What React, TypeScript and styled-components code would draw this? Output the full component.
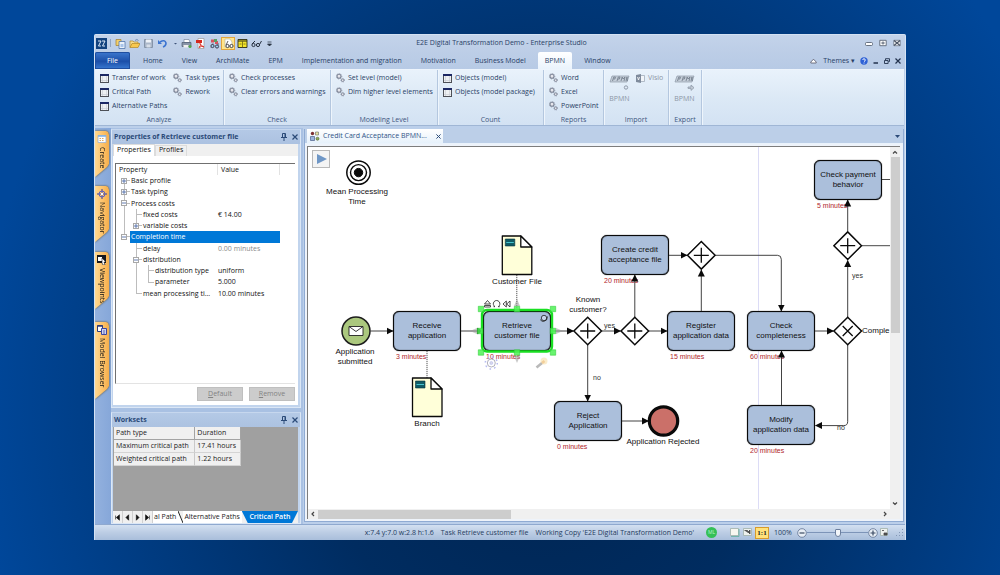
import React from 'react';
import styled, { createGlobalStyle, css } from 'styled-components';

const ui = '"Open Sans", "Noto Sans", sans-serif';
const diagramFont = '"Liberation Sans", Arial, sans-serif';
const ink = '#293f66';

const GlobalStyle = createGlobalStyle`
  * { box-sizing: border-box; }
  body {
    margin: 0;
    min-height: 100vh;
    background: radial-gradient(ellipse 56% 110% at 54% 70%, #002450 0%, #002c60 40%, #00479a 100%);
    font: 7px/10px ${ui};
    color: ${ink};
  }
  button {
    margin: 0;
    padding: 0;
    border: 0;
    background: none;
    color: inherit;
    font: inherit;
    white-space: nowrap;
  }
  svg { display: block; flex: none; }
`;

const Page = styled.main`
  padding: 34px 94px 35px;
`;

const Window = styled.div`
  display: flex;
  flex-direction: column;
  background: #bbcfe9;
  border-left: 1px solid #d5e3f5;
  border-right: 1px solid #d5e3f5;
  border-radius: 2px 2px 0 0;
  overflow: hidden;
`;

/* ---------- title bar ---------- */

const TitleBar = styled.header`
  display: grid;
  grid-template-columns: 1fr auto 1fr;
  align-items: center;
  height: 17px;
  padding: 0 4px 0 1px;
  border-top: 1px solid #d3e1f3;
  background: linear-gradient(#c3d3ea, #bdcee7);
`;

const WindowTitle = styled.span`
  padding-left: 6px;
`;

const QuickAccess = styled.div`
  display: flex;
  align-items: center;
  gap: 2px;
`;

const QuickButton = styled.button<{ $active?: boolean; $narrow?: boolean }>`
  display: grid;
  place-items: center;
  width: ${(p) => (p.$narrow ? 8 : 12)}px;
  height: 13px;
  ${(p) =>
    p.$active &&
    css`
      width: 14px;
      margin: 0 -1px;
      background: #ffe58c;
      box-shadow: inset 0 0 0 1px #e2a63c;
    `}
`;

const Divider = styled.span`
  width: 1px;
  height: 8px;
  margin: 0 1px;
  background: #8fa4c4;
`;

const WindowButtons = styled.div`
  display: flex;
  justify-content: flex-end;
  gap: 6px;
`;

/* ---------- ribbon ---------- */

const TabRow = styled.nav`
  display: flex;
  align-items: stretch;
  gap: 1px;
  height: 18px;
  padding-top: 1px;
  background: linear-gradient(#bdcee7, #b7cae5);
`;

const FileTab = styled.button`
  width: 35px;
  margin-right: 3px;
  border-radius: 2px 2px 0 0;
  background: linear-gradient(#3d78cf, #1c4fa8 55%, #3a7ad2);
  box-shadow: inset 0 0 0 1px #1f4e9f;
  color: #fff;
`;

const RibbonTab = styled.button<{ $active?: boolean }>`
  padding: 0 9px;
  ${(p) =>
    p.$active &&
    css`
      margin: 0 2px;
      padding: 0 7px;
      border-radius: 2px 2px 0 0;
      background: linear-gradient(#fff, #eaf3fc);
    `}
`;

const TabTools = styled.div`
  display: flex;
  align-items: center;
  gap: 5px;
  margin-left: auto;
  padding-right: 4px;
`;

const Ribbon = styled.section`
  display: flex;
  height: 57px;
  margin-right: 1px;
  background: linear-gradient(#e9f2fb, #dce9f6 50%, #d3e2f3);
  border-top: 1px solid #edf4fc;
  border-bottom: 1px solid #9fb6d5;
`;

const Group = styled.div<{ $width: number }>`
  display: flex;
  flex-direction: column;
  flex: none;
  width: ${(p) => p.$width}px;
  padding: 1px 0 0 5px;
  border-right: 1px solid #b4c7df;
  box-shadow: 1px 0 0 #eef5fc;
`;

const GroupColumns = styled.div`
  display: flex;
  flex: none;
  gap: 6px;
  height: 42px;
`;

const GroupColumn = styled.div`
  display: flex;
  flex-direction: column;
`;

const GroupLabel = styled.div`
  margin-left: -5px;
  text-align: center;
  line-height: 13px;
  color: #3e5680;
`;

const Command = styled.button<{ $muted?: boolean }>`
  display: flex;
  align-items: center;
  gap: 3px;
  height: 14px;
  color: ${(p) => (p.$muted ? '#8c96a5' : ink)};
`;

const BigCommand = styled.button`
  display: flex;
  flex-direction: column;
  align-items: center;
  gap: 3px;
  height: 38px;
  padding-top: 3px;
  color: #8c96a5;
`;

/* ---------- work area ---------- */

const Body = styled.div`
  display: flex;
  padding-top: 2px;
  background: #bbcfea;
`;

const Dock = styled.aside`
  display: flex;
  flex-direction: column;
  flex: none;
  width: 16px;
  padding-top: 3px;
  background: linear-gradient(90deg, #93b1de, #86a7d9);
`;

const DockShadow = styled.div<{ $height: number; $gap: number }>`
  width: 15px;
  height: ${(p) => p.$height}px;
  margin-bottom: ${(p) => p.$gap}px;
  filter: drop-shadow(0 0 1px #5c5030);
`;

const DockTab = styled.button`
  display: flex;
  flex-direction: column;
  align-items: center;
  gap: 3px;
  width: 14px;
  height: 100%;
  padding-top: 3px;
  background: linear-gradient(90deg, #ffd992, #fdc066 60%, #f4ae4c);
  clip-path: polygon(0 0, 11px 0, 13px 1px, 14px 4px, 14px calc(100% - 13px), 12px calc(100% - 10px), 0 100%);
  color: #111;
`;

const DockText = styled.span`
  writing-mode: vertical-rl;
  line-height: 8px;
`;

const SideColumn = styled.div`
  display: flex;
  flex-direction: column;
  flex: none;
  gap: 4px;
  width: 192px;
  padding: 1px 2px 0 0;
  background: #a9c1e3;
`;

const Panel = styled.section<{ $grow?: boolean }>`
  display: flex;
  flex-direction: column;
  ${(p) => p.$grow && 'flex: 1;'}
  border: 1px solid #dbe7f6;
  border-top-color: #c6d7ee;
  background: #c1d4ed;
`;

const PanelHeader = styled.h2`
  display: flex;
  align-items: center;
  gap: 5px;
  height: 14px;
  margin: 0;
  padding: 0 2px;
  background: linear-gradient(#b4c9e6, #acc2e1);
  font: 700 7px/14px ${ui};
  color: #2b4a78;
`;

const PanelTitle = styled.span`
  flex: 1;
`;

const PanelBody = styled.div<{ $flush?: boolean }>`
  display: flex;
  flex-direction: column;
  flex: 1;
  margin: 0 2px ${(p) => (p.$flush ? 0 : 2)}px 1px;
  background: #fff;
`;

const PageTabs = styled.div`
  display: flex;
  align-items: flex-end;
  height: 12px;
  background: #f0f0f0;
  color: #111;
`;

const PageTab = styled.button<{ $active?: boolean }>`
  height: ${(p) => (p.$active ? 12 : 11)}px;
  padding: 0 3px 2px;
  line-height: 8px;
  border: 1px solid #dcdcdc;
  border-bottom: 0;
  background: ${(p) => (p.$active ? '#fff' : '#f0f0f0')};
`;

const TreeBox = styled.div`
  height: 221px;
  margin: 7px 3px 3px 2px;
  border-left: 1px solid #707070;
  border-top: 1px solid #707070;
  border-bottom: 1px solid #e3e3e3;
  color: #111;
`;

const TreeHead = styled.div`
  display: grid;
  grid-template-columns: 102px 62px;
  height: 11px;
  line-height: 11px;

  span {
    padding-left: 3px;
    border-right: 1px solid #e2e2e2;
  }
`;

const TreeRows = styled.div`
  display: grid;
  grid-auto-rows: 1fr;
  width: 164px;
  height: 124px;
`;

const TreeRow = styled.div`
  display: grid;
  grid-template-columns: 102px 62px;
  align-items: stretch;
`;

const TreeName = styled.div`
  display: flex;
  min-width: 0;
  padding-left: 2px;
`;

const TreeText = styled.span<{ $selected?: boolean }>`
  flex: 1;
  padding-left: 1px;
  line-height: 11px;
  white-space: nowrap;
  ${(p) => p.$selected && 'background: #0078d7; color: #fff;'}
`;

const TreeValue = styled.span<{ $selected?: boolean; $muted?: boolean }>`
  line-height: 11px;
  white-space: nowrap;
  color: ${(p) => (p.$muted ? '#8a8a8a' : '#111')};
  ${(p) => p.$selected && 'background: #0078d7;'}
`;

type GuideKind = ' ' | '|' | 'L' | 'T' | 'top';

const Guide = styled.span<{ $kind: GuideKind }>`
  display: flex;
  align-items: center;
  justify-content: center;
  flex: none;
  width: 12px;
  background-repeat: no-repeat;
  background-image: linear-gradient(#bdbdbd, #bdbdbd), linear-gradient(#bdbdbd, #bdbdbd);
  background-size: ${(p) =>
    p.$kind === ' '
      ? '0 0, 0 0'
      : p.$kind === '|'
        ? '1px 100%, 0 0'
        : p.$kind === 'T'
          ? '1px 100%, 6px 1px'
          : '1px 50%, 6px 1px'};
  background-position: ${(p) => (p.$kind === 'top' ? '6px 100%' : '6px 0')}, 6px 50%;
`;

const Toggle = styled.button`
  display: grid;
  place-items: center;
  width: 6px;
  height: 6px;
  border: 1px solid #a8a8a8;
  background: #fff;
`;

const ButtonBar = styled.div`
  display: flex;
  justify-content: flex-end;
  gap: 6px;
  padding: 0 3px 4px 0;
`;

const DisabledButton = styled.button`
  width: 46px;
  height: 14px;
  border: 1px solid #bfbfbf;
  background: #ccc;
  color: #838383;
`;

const GridArea = styled.div`
  flex: 1;
  padding-left: 1px;
  background: #a0a0a0;
`;

const PathTable = styled.table`
  width: 127px;
  border-collapse: separate;
  border-spacing: 0;
  background: #f0f0f0;
  color: #222;

  th, td {
    height: 13px;
    padding: 0 2px;
    border-right: 1px solid #c9c9c9;
    border-bottom: 1px solid #d4d4d4;
    font-weight: 400;
    text-align: left;
    line-height: 12px;
    white-space: nowrap;
  }
  th { border-color: #a3a3a3; }
`;

const SheetTabs = styled.div`
  display: flex;
  height: 12px;
  background: #f0f0f0;
  color: #222;
`;

const SheetNav = styled.button`
  display: grid;
  place-items: center;
  width: 10px;
  border-right: 1px solid #d0d0d0;
`;

const SheetTab = styled.button<{ $active?: boolean }>`
  padding: 0 2px 0 1px;
  line-height: 12px;
  ${(p) =>
    p.$active
      ? css`
          flex: 1;
          background: #0078d7;
          color: #fff;
          font-weight: 600;
          clip-path: polygon(0 0, 100% 0, calc(100% - 6px) 100%, 6px 100%);
          padding: 0;
        `
      : css`
          background: #fff;
        `}
`;

/* ---------- editor ---------- */

const Editor = styled.section`
  display: flex;
  flex-direction: column;
  flex: 1;
  min-width: 0;
  margin: 1px 1px 2px;
  border: 1px solid #8fabd3;
  border-top: 0;
  background: #eef3fa;
`;

const EditorTabs = styled.div`
  display: flex;
  align-items: center;
  height: 15px;
  padding: 0 3px 0 2px;
  background: #bccfe8;
  border-bottom: 1px solid #eaf3fc;
`;

const EditorTab = styled.div`
  display: flex;
  align-items: center;
  gap: 3px;
  height: 14px;
  padding: 0 2px 0 3px;
  background: linear-gradient(#fff, #e6f1fb);
`;

const EditorTabLabel = styled.button`
  margin-right: 6px;
  color: #2f5486;
`;

const MenuArrow = styled.button`
  margin-left: auto;
`;

const CanvasFrame = styled.div`
  display: grid;
  grid-template-columns: minmax(0, 1fr) 10px;
  grid-template-rows: minmax(362px, 1fr) 10px;
  flex: 1;
  margin: 2px 3px 2px 2px;
  border-left: 1px solid #7d7d7d;
  border-top: 1px solid #7d7d7d;
  background: #f0f0f0;
`;

const Canvas = styled.div`
  position: relative;
  overflow: hidden;
  background: #fff;
  font: 8px/10px ${diagramFont};
  color: #111;
`;

const VScroll = styled.div`
  display: flex;
  flex-direction: column;
  align-items: center;
`;

const HScroll = styled.div`
  display: flex;
  align-items: center;
`;

const ScrollArrow = styled.button`
  display: grid;
  place-items: center;
  flex: none;
  width: 10px;
  height: 10px;
`;

const VThumb = styled.div`
  width: 9px;
  height: 176px;
  margin-bottom: auto;
  background: #cdcdcd;
`;

const HThumb = styled.div`
  width: 193px;
  height: 9px;
  margin-right: auto;
  background: #cdcdcd;
`;

/* ---------- diagram ---------- */

/* Model coordinate shown in the canvas's top left corner. */
const origin = { x: 308, y: 147 };

const Drawing = styled.svg`
  position: absolute;
  left: 0;
  top: 0;
  width: 100%;
  height: 100%;
`;

const Task = styled.div<{ $x: number; $y: number }>`
  position: absolute;
  left: ${(p) => p.$x - origin.x}px;
  top: ${(p) => p.$y - origin.y}px;
  display: grid;
  place-items: center;
  width: 68px;
  height: 40px;
  border: 1px solid #0a0a0a;
  border-radius: 6px;
  background: #abbfdb;
  box-shadow: inset 0 0 1px #000, 0 0 1px #000;
  text-align: center;
  white-space: pre-line;
`;

const Caption = styled.div<{ $x: number; $y: number }>`
  position: absolute;
  left: ${(p) => p.$x - origin.x}px;
  top: ${(p) => p.$y - origin.y}px;
  transform: translateX(-50%);
  text-align: center;
  white-space: pre;
`;

const Note = styled.div<{ $x: number; $y: number; $tone?: 'time' | 'plain' }>`
  position: absolute;
  left: ${(p) => p.$x - origin.x}px;
  top: ${(p) => p.$y - origin.y}px;
  font-size: ${(p) => (p.$tone === 'plain' ? 8 : 7)}px;
  line-height: ${(p) => (p.$tone === 'plain' ? 10 : 8)}px;
  white-space: nowrap;
  color: ${(p) => (p.$tone === 'time' ? '#b0262c' : p.$tone === 'plain' ? '#111' : '#333')};
`;

const PlayButton = styled.button`
  position: absolute;
  left: 4px;
  top: 3px;
  display: grid;
  place-items: center;
  width: 18px;
  height: 18px;
  border: 1px solid #b9b9b9;
  background: #f4f4f4;
`;

/* ---------- status bar ---------- */

const StatusBar = styled.footer`
  display: flex;
  align-items: center;
  justify-content: flex-end;
  height: 16px;
  padding-right: 1px;
  border-top: 1px solid #8fa9cf;
  background: linear-gradient(#d3e0f1, #bccde4 50%, #a9bedb);
  color: #243b60;
`;

const StatusText = styled.span`
  margin-right: 7px;
  white-space: nowrap;
`;

const Presence = styled.span`
  width: 11px;
  height: 11px;
  margin: 0 12px 0 5px;
  border-radius: 50%;
  background: #35c057;
  color: #b9f0c6;
  text-align: center;
  font: 5px/11px ${ui};
`;

const StatusButton = styled.button`
  display: grid;
  place-items: center;
  width: 12px;
  height: 12px;
  margin-right: 1px;
`;

const ActualSize = styled.button`
  width: 14px;
  height: 12px;
  margin-right: 5px;
  border: 1px solid #d79b2c;
  background: #ffe27a;
  font: 700 7px/10px "Liberation Serif", serif;
  color: #222;
`;

const Percent = styled.output`
  width: 23px;
`;

const ZoomSlider = styled.input`
  appearance: none;
  width: 61px;
  height: 10px;
  margin: 0;
  background: linear-gradient(#7d94b8, #7d94b8) center / 100% 1px no-repeat;

  &::-webkit-slider-thumb {
    appearance: none;
    width: 6px;
    height: 8px;
    border: 1px solid #6c7f9e;
    border-radius: 1px 1px 3px 3px;
    background: #f3f6fa;
  }
`;

const Grip = styled.svg`
  margin-left: 4px;
`;

/* ---------- small icons ---------- */

const Gears = () => (
  <svg width="9" height="10" viewBox="0 0 9 10" fill="none" stroke="#7f8798">
    <circle cx="3" cy="3.2" r="2" strokeWidth="1.1" fill="#e6e6ec" />
    <circle cx="3" cy="3.2" r="2.8" strokeWidth=".7" strokeDasharray="1 1.1" />
    <circle cx="6.7" cy="7.2" r="1.3" strokeWidth=".9" fill="#e6e6ec" />
    <circle cx="6.7" cy="7.2" r="1.9" strokeWidth=".6" strokeDasharray=".8 .8" />
  </svg>
);

const Sheet = () => (
  <svg width="9" height="9" viewBox="0 0 9 9">
    <rect x=".5" y=".5" width="8" height="8" fill="#eef1f3" stroke="#4d5057" />
    <rect x="0" y="0" width="9" height="2" fill="#1c2864" />
    <path d="M2.5 2v6M6.5 2v6M1 6.5h7" stroke="#c6cad1" strokeWidth=".6" />
  </svg>
);

const BpmnMark = ({ arrow }: { arrow?: boolean }) => (
  <svg width="21" height="17" viewBox="0 0 21 17" fill="none" stroke="#8e99a8">
    <path d="M3 2h17l-2 6H1z" fill="#c5ced9" strokeWidth=".7" />
    <path d="M3.500 7l1.300-4h1.600l-.5 2H4.600M8 7l1.300-4h1.700l-.6 2H9M12 7l1.200-4 .8 2 2-2-1 4M17 7l1-4 .4 4" strokeWidth=".9" stroke="#76818f" />
    {arrow ? (
      <path d="M14 13h3v-2l3 2.700-3 2.700v-2h-3z" fill="#c3ccd7" strokeWidth=".8" />
    ) : (
      <circle cx="17" cy="13.500" r="1.700" strokeWidth="1" />
    )}
  </svg>
);

const Pin = () => (
  <svg width="6" height="8" viewBox="0 0 6 8" fill="none" stroke="#2b4a78">
    <path d="M1.500 .5h3v4h-3zM0 4.500h6M3 4.500V8" />
    <path d="M4 1v3" />
  </svg>
);

const Cross = ({ color = '#2b4a78', size = 6 }: { color?: string; size?: number }) => (
  <svg width={size} height={size} viewBox="0 0 6 6" stroke={color} strokeWidth="1.200">
    <path d="M.5.5l5 5M5.500.5l-5 5" />
  </svg>
);

const quickIcons: { name: string; active?: boolean; narrow?: boolean; art: React.ReactNode }[] = [
  {
    name: 'New package',
    art: (
      <>
        <path d="M1 1.500h5v6H1z" fill="#f3cf6b" stroke="#a07c2d" strokeWidth=".7" />
        <path d="M4 3.500h6v7H4z" fill="#e9f1fb" stroke="#5176ad" strokeWidth=".8" />
        <path d="M5.500 6h3v3h-3z" fill="#a8c4ea" />
      </>
    ),
  },
  {
    name: 'Open',
    art: (
      <>
        <path d="M1 9.500V3h3l1 1h4v2" fill="#f7dc8a" stroke="#b38724" strokeWidth=".7" />
        <path d="M1 9.500L3 5.500h8l-2 4z" fill="#f8c84e" stroke="#b38724" strokeWidth=".7" />
        <path d="M6 2.500q2-2 3.500 0" fill="none" stroke="#5c78a8" strokeWidth=".8" />
      </>
    ),
  },
  {
    name: 'Save',
    art: (
      <>
        <path d="M1.500 1.500h8v8h-8z" fill="#aab7c9" stroke="#8594a9" />
        <path d="M3 1.500h5v3H3z" fill="#eef2f7" />
        <path d="M3.500 6.500h4v3h-4z" fill="#d7dee8" />
      </>
    ),
  },
  {
    name: 'Undo',
    art: (
      <>
        <path d="M3 4q5-3 6 1 0 3-3 4" fill="none" stroke="#3c74d0" strokeWidth="1.600" />
        <path d="M1 2v4h4z" fill="#3c74d0" />
      </>
    ),
  },
  { name: 'Undo history', narrow: true, art: <path d="M4 5h3L5.500 6.500z" fill="#3d5379" /> },
  {
    name: 'Print',
    art: (
      <>
        <path d="M3 1.500h5l1 3H3z" fill="#fff" stroke="#77869d" strokeWidth=".7" />
        <path d="M1 4.500h9v4H1z" fill="#8894a8" stroke="#4c596e" strokeWidth=".7" />
        <path d="M2.500 7h5v2.500h-5z" fill="#eee" />
        <circle cx="9" cy="8.500" r="1.500" fill="#4fa64a" />
      </>
    ),
  },
  {
    name: 'Export PDF',
    art: (
      <>
        <path d="M3 .5h6v10H3z" fill="#fff" stroke="#9a9a9a" strokeWidth=".7" />
        <path d="M1 2h6v3H1z" fill="#d5281f" />
        <path d="M4 9.500q3-4 1-4t4 3.500q-2-1.500-5 .5" fill="none" stroke="#d5281f" strokeWidth=".9" />
      </>
    ),
  },
  {
    name: 'Colours',
    art: (
      <>
        <path d="M2 1.500h3v3H2zM6 3h3v3H6z" fill="#d8545e" />
        <path d="M5 1h3v3H5z" fill="#58a266" />
        <path d="M2 9.500l2-4M9.500 5.500l-2 4" stroke="#445" strokeWidth=".8" />
        <circle cx="3.500" cy="8" r="1.600" fill="#9fd0f0" stroke="#334" strokeWidth=".9" />
        <circle cx="8" cy="8.500" r="1.600" fill="#9fd0f0" stroke="#334" strokeWidth=".9" />
      </>
    ),
  },
  {
    name: 'Labels view',
    active: true,
    art: (
      <>
        <path d="M2 1h5l2 3v5H2z" fill="#fff" stroke="#b9b9a5" strokeWidth=".7" />
        <circle cx="4.500" cy="8" r="1.600" fill="#fff" stroke="#333" strokeWidth=".9" />
        <circle cx="8.500" cy="8" r="1.600" fill="#fff" stroke="#333" strokeWidth=".9" />
        <path d="M3 7l2-4" stroke="#333" strokeWidth=".8" />
      </>
    ),
  },
  {
    name: 'Table view',
    art: (
      <>
        <path d="M1 1.500h9v8H1z" fill="#f4e52b" stroke="#2b2b14" strokeWidth=".9" />
        <path d="M1 3h9" stroke="#2b2b14" strokeWidth="1.200" />
        <path d="M5.500 3v6.500M2.500 6h2M6.500 6h2" stroke="#6c6510" strokeWidth=".8" />
      </>
    ),
  },
  {
    name: 'View settings',
    art: (
      <>
        <circle cx="2.500" cy="7" r="1.600" fill="none" stroke="#26303f" />
        <circle cx="7" cy="7" r="1.600" fill="none" stroke="#26303f" />
        <path d="M1 6l3-3M8.500 6.500L10.500 3" stroke="#26303f" />
      </>
    ),
  },
  { name: 'Customize toolbar', narrow: true, art: <path d="M3.500 4h4M3.500 6h4L5.500 8z" fill="#26303f" stroke="#26303f" strokeWidth=".7" /> },
];

/* ---------- data ---------- */

const ribbonTabs = ['Home', 'View', 'ArchiMate', 'EPM', 'Implementation and migration', 'Motivation', 'Business Model', 'BPMN', 'Window'];

const groups: { label: string; width: number; icon: 'sheet' | 'gears'; columns: { icon?: 'gears'; items: string[] }[] }[] = [
  {
    label: 'Analyze',
    width: 129,
    icon: 'sheet',
    columns: [{ items: ['Transfer of work', 'Critical Path', 'Alternative Paths'] }, { icon: 'gears', items: ['Task types', 'Rework'] }],
  },
  { label: 'Check', width: 107, icon: 'gears', columns: [{ items: ['Check processes', 'Clear errors and warnings'] }] },
  { label: 'Modeling Level', width: 107, icon: 'gears', columns: [{ items: ['Set level (model)', 'Dim higher level elements'] }] },
  { label: 'Count', width: 106, icon: 'sheet', columns: [{ items: ['Objects (model)', 'Objects (model package)'] }] },
  { label: 'Reports', width: 60, icon: 'gears', columns: [{ items: ['Word', 'Excel', 'PowerPoint'] }] },
];

const treeRows: { guides: GuideKind[]; toggle?: '+' | '-'; name: string; value?: string; muted?: boolean; selected?: boolean }[] = [
  { guides: ['top'], toggle: '+', name: 'Basic profile' },
  { guides: ['T'], toggle: '+', name: 'Task typing' },
  { guides: ['T'], toggle: '-', name: 'Process costs' },
  { guides: ['|', 'T'], name: 'fixed costs', value: '€ 14.00' },
  { guides: ['|', 'L'], toggle: '+', name: 'variable costs' },
  { guides: ['L'], toggle: '-', name: 'Completion time', selected: true },
  { guides: [' ', 'T'], name: 'delay', value: '0.00 minutes', muted: true },
  { guides: [' ', 'T'], toggle: '-', name: 'distribution' },
  { guides: [' ', '|', 'T'], name: 'distribution type', value: 'uniform' },
  { guides: [' ', '|', 'L'], name: 'parameter', value: '5.000' },
  { guides: [' ', 'L'], name: 'mean processing ti...', value: '10.00 minutes' },
];

const tasks: { x: number; y: number; text: string; time: string }[] = [
  { x: 393, y: 311, text: 'Receive\napplication', time: '3 minutes' },
  { x: 483, y: 311, text: 'Retrieve\ncustomer file', time: '10 minutes' },
  { x: 601, y: 235, text: 'Create credit\nacceptance file', time: '20 minutes' },
  { x: 667, y: 311, text: 'Register\napplication data', time: '15 minutes' },
  { x: 554, y: 401, text: 'Reject\nApplication', time: '0 minutes' },
  { x: 747, y: 311, text: 'Check\ncompleteness', time: '60 minutes' },
  { x: 747, y: 405, text: 'Modify\napplication data', time: '20 minutes' },
  { x: 814, y: 160, text: 'Check payment\nbehavior', time: '5 minutes' },
];

const flows = [
  'M370.500 331H393',
  'M461 331H483',
  'M551 331H573.500',
  'M602 331H620.500',
  'M634.800 317V275',
  'M649 331H667',
  'M701.300 311V270',
  'M669 255.300H687',
  'M715.500 255.300H777.500Q781.300 255.300 781.300 259.300V311',
  'M587.700 345V401',
  'M622 421H648.500',
  'M815 331H833.500',
  'M781.500 405V351',
  'M847.700 345V421.500Q847.700 425.600 843.700 425.600H815.500',
  'M847.700 317V260.500',
  'M847.700 231V200',
];

const gateways: [number, number, 'plus' | 'x'][] = [
  [587.7, 331, 'plus'],
  [634.8, 331, 'plus'],
  [701.3, 255.3, 'plus'],
  [847.7, 245.7, 'plus'],
  [847.7, 331, 'x'],
];

const captions: [number, number, string][] = [
  [357, 187, 'Mean Processing\nTime'],
  [517, 277, 'Customer File'],
  [355, 347, 'Application\nsubmitted'],
  [427, 419, 'Branch'],
  [588, 295, 'Known\ncustomer?'],
  [663, 437, 'Application Rejected'],
];

const notes: [number, number, string][] = [
  [604, 322, 'yes'],
  [593, 374, 'no'],
  [852, 272, 'yes'],
  [837, 424, 'no'],
];

const handles: [number, number][] = [
  [481, 309], [517, 309], [553, 309],
  [480, 331], [553, 331],
  [481, 352.5], [517, 352.5], [553, 352.5],
];

const Document = ({ x, y }: { x: number; y: number }) => (
  <g transform={`translate(${x} ${y})`} strokeLinejoin="round">
    <path d="M0 0H18.500L29.500 11V38.500H0z" fill="#ffffd9" stroke="#0a0a0a" strokeWidth="1.300" />
    <path d="M18.500 0V11H29.500z" fill="#fff" stroke="#0a0a0a" strokeWidth="1.300" />
    <rect x="3" y="3" width="9.500" height="7" fill="#0f5b66" stroke="#08323a" strokeWidth=".6" />
    <path d="M4 6.500h7.500" stroke="#48c4cf" />
  </g>
);

const world = `translate(${-origin.x} ${-origin.y})`;

function Connectors() {
  return (
    <Drawing aria-hidden="true">
      <defs>
        <marker id="head" viewBox="0 0 7 8" refX="6.500" refY="4" markerWidth="7" markerHeight="8" markerUnits="userSpaceOnUse" orient="auto">
          <path d="M0 .5L7 4 0 7.500z" fill="#0a0a0a" />
        </marker>
      </defs>
      <g transform={world} fill="none">
        <path d="M758.500 147V520" stroke="#dcdcf6" />
        <path d="M516.800 275V311M427 351V378" stroke="#555" strokeDasharray="1.200 .8" />
        <path d="M882 179.500H900M862 245.700H900" stroke="#333" strokeWidth=".9" />
      </g>
    </Drawing>
  );
}

function Shapes() {
  return (
    <Drawing aria-hidden="true">
      <g transform={world} fill="none">
        <g stroke="#2c2c2c" strokeWidth=".9">
          {flows.map((d) => (
            <path key={d} d={d} markerEnd="url(#head)" />
          ))}
        </g>
        {gateways.map(([x, y, kind]) => (
          <g key={`${x}-${y}`} transform={`translate(${x} ${y})`} stroke="#0a0a0a">
            <path d="M0-13.800L13.800 0 0 13.800-13.800 0z" fill="#fff" strokeWidth="1.500" />
            <path d={kind === 'plus' ? 'M0-7.500V7.500M-7.500 0H7.500' : 'M-5-5L5 5M5-5L-5 5'} strokeWidth="1.300" />
          </g>
        ))}
        <g stroke="#0a0a0a">
          <circle cx="358.500" cy="172.600" r="11.700" strokeWidth="1.500" fill="#fff" />
          <circle cx="358.500" cy="172.600" r="8" strokeWidth="1.400" />
          <circle cx="358.500" cy="172.600" r="4.200" fill="#0a0a0a" />
        </g>
        <circle cx="356" cy="331" r="14" fill="#abc87e" stroke="#1c1c1c" strokeWidth="1.500" />
        <g stroke="#222" strokeWidth=".9">
          <path d="M349 326.500h14v9h-14z" fill="#fff" />
          <path d="M349 326.500l7 5 7-5" />
        </g>
        <circle cx="663.500" cy="421" r="14.200" fill="#cb7069" stroke="#0a0a0a" strokeWidth="3.200" />
        <Document x={502.3} y={236} />
        <Document x={412.5} y={378} />

        <rect x="482" y="310" width="70" height="41.500" rx="5" stroke="#19e022" strokeWidth="2.400" />
        <g fill="#4df255" stroke="#35cf3e" strokeWidth=".6" fillOpacity=".85">
          {handles.map(([x, y]) => (
            <path key={`${x}-${y}`} d={`M${x - 2.7} ${y - 2.7}h5.400v5.400h-5.400z`} />
          ))}
        </g>
        <g fill="#9a9a9a" fillOpacity=".55">
          <path d="M517 299l3 7h-6zM517 363l3-7h-6zM470 331l7-3v6zM563 331l-7-3v6z" />
        </g>
        <g stroke="#222" strokeWidth=".8">
          <path d="M484.500 304l3-3.500 3 3.500zM484.500 305.500h6v1.500h-6z" />
          <path d="M495 306.700h-1.500M495 306.700a3.300 3.300 0 1 1 3.200 0h1.600" />
          <path d="M506.300 301v6l-3.300-3zM510 301v6l-3.300-3z" />
          <circle cx="544" cy="318" r="2.700" fill="#c7d5e8" />
          <path d="M540.500 319.500q.5 2 3 2 4-.5 4-5" />
        </g>
        <g stroke="#b6bbf2">
          <circle cx="491.300" cy="363" r="4" strokeWidth=".9" stroke="#a9a9b5" />
          <circle cx="491.300" cy="363" r="1.500" fill="#d8d8e8" strokeWidth=".6" />
          <circle cx="491.300" cy="363" r="6" strokeWidth="1.500" strokeDasharray="1.600 3.110" />
        </g>
        <circle cx="544" cy="361" r="3.500" fill="#fbeccb" />
        <path d="M536.500 367.500l5.500-4.500" stroke="#b9b9b9" strokeWidth="2.600" />
        <path d="M542 363l2.500-2" stroke="#f3cf9a" strokeWidth="2.600" />
      </g>
    </Drawing>
  );
}

function DockItem({ label, height, gap, art }: { label: string; height: number; gap: number; art: React.ReactNode }) {
  return (
    <DockShadow $height={height} $gap={gap}>
      <DockTab>
        <svg width="10" height="10" viewBox="0 0 10 10">{art}</svg>
        <DockText>{label}</DockText>
      </DockTab>
    </DockShadow>
  );
}

export default function App() {
  return (
    <Page>
      <GlobalStyle />
      <Window>
        <TitleBar>
          <QuickAccess>
            <svg width="11" height="11" viewBox="0 0 11 11">
              <rect width="11" height="11" fill="#12427e" />
              <path d="M2 3h3L2.500 8H5M6 3h3L6.500 8H9" fill="none" stroke="#dbe8f7" />
            </svg>
            <Divider />
            {quickIcons.map((q) => (
              <QuickButton key={q.name} $active={q.active} $narrow={q.narrow} aria-label={q.name}>
                <svg width="11" height="11" viewBox="0 0 11 11">{q.art}</svg>
              </QuickButton>
            ))}
          </QuickAccess>
          <WindowTitle>E2E Digital Transformation Demo - Enterprise Studio</WindowTitle>
          <WindowButtons>
            <button aria-label="Minimize">
              <svg width="8" height="8" viewBox="0 0 8 8"><rect x=".5" y="3.500" width="7" height="3" rx="1" fill="#fff" stroke="#5a6475" strokeWidth=".9" /></svg>
            </button>
            <button aria-label="Restore">
              <svg width="8" height="8" viewBox="0 0 8 8"><path d="M.8 1.300h6.400v5.400H.8zM3 3.200h2v1.600H3z" fill="#fff" stroke="#5a6475" strokeWidth=".9" /></svg>
            </button>
            <button aria-label="Close">
              <svg width="8" height="8" viewBox="0 0 8 8"><path d="M.8 1.300h6.400v5.400H.8z" fill="#fff" stroke="#5a6475" strokeWidth=".7" /><path d="M1 1.500l6 5M7 1.500l-6 5" stroke="#4a5465" strokeWidth="1.200" /></svg>
            </button>
          </WindowButtons>
        </TitleBar>

        <TabRow>
          <FileTab>File</FileTab>
          {ribbonTabs.map((t) => (
            <RibbonTab key={t} $active={t === 'BPMN'}>{t}</RibbonTab>
          ))}
          <TabTools>
            <button aria-label="Collapse ribbon">
              <svg width="7" height="6" viewBox="0 0 7 6"><path d="M.8 4L3.500 1.200 6.200 4v1H.8z" fill="#fff" stroke="#556" strokeWidth=".8" /></svg>
            </button>
            <button>&nbsp;Themes ▾</button>
            <button aria-label="Help">
              <svg width="8" height="8" viewBox="0 0 8 8"><circle cx="4" cy="4" r="3.700" fill="#2f62d6" /><path d="M2.800 3q0-1.300 1.200-1.300T5.200 3 4 4.600M4 5.600v.9" fill="none" stroke="#fff" strokeWidth=".9" /></svg>
            </button>
            <button aria-label="Minimize view">
              <svg width="6" height="6" viewBox="0 0 6 6"><path d="M.5 5h4.500" stroke="#23324d" strokeWidth="1.500" /></svg>
            </button>
            <button aria-label="Restore view">
              <svg width="6" height="6" viewBox="0 0 6 6" fill="none" stroke="#23324d"><path d="M1.500 2V.7h4v2.800H4.500M.5 2.500h3.600v3H.5z" strokeWidth=".9" /></svg>
            </button>
            <button aria-label="Close view"><Cross color="#23324d" /></button>
          </TabTools>
        </TabRow>

        <Ribbon>
          {groups.map((g) => (
            <Group key={g.label} $width={g.width}>
              <GroupColumns>
                {g.columns.map((c, i) => (
                  <GroupColumn key={i}>
                    {c.items.map((item) => (
                      <Command key={item}>
                        {(c.icon ?? g.icon) === 'sheet' ? <Sheet /> : <Gears />}
                        {item}
                      </Command>
                    ))}
                  </GroupColumn>
                ))}
              </GroupColumns>
              <GroupLabel>{g.label}</GroupLabel>
            </Group>
          ))}
          <Group $width={65}>
            <GroupColumns>
              <BigCommand disabled><BpmnMark />BPMN</BigCommand>
              <GroupColumn>
                <Command $muted disabled>
                  <svg width="9" height="9" viewBox="0 0 9 9"><path d="M0 1l5-1v9L0 8z" fill="#7f8b9c" /><path d="M5 1.500h3.500v6H5" fill="#f2f5f9" stroke="#98a3b2" strokeWidth=".7" /><path d="M1.500 3l1 3 1-3" fill="none" stroke="#fff" strokeWidth=".8" /></svg>
                  Visio
                </Command>
              </GroupColumn>
            </GroupColumns>
            <GroupLabel>Import</GroupLabel>
          </Group>
          <Group $width={33}>
            <GroupColumns>
              <BigCommand disabled><BpmnMark arrow />BPMN</BigCommand>
            </GroupColumns>
            <GroupLabel>Export</GroupLabel>
          </Group>
        </Ribbon>

        <Body>
          <Dock>
            <DockItem
              label="Create"
              height={46}
              gap={9}
              art={<><path d="M1 1.500h8v7H1z" fill="#fff" stroke="#9ab0d0" strokeWidth=".8" /><path d="M1 2h8" stroke="#7fb0e4" strokeWidth="1.500" /><path d="M2.500 4.500h1.500M5 4.500h1.500M2.500 6.500h1.500M5 6.500h1.500" stroke="#e2a95c" /></>}
            />
            <DockItem
              label="Navigator"
              height={56}
              gap={10}
              art={<><path d="M5 0v10M0 5h10" stroke="#3b3f9c" /><circle cx="5" cy="5" r="3" fill="none" stroke="#5a5fc0" /><circle cx="5" cy="5" r="1.200" fill="#fff" /></>}
            />
            <DockItem
              label="Viewpoints"
              height={57}
              gap={13}
              art={<><path d="M0 0h9v8H0z" fill="#14161c" /><path d="M1 2h4v4H1z" fill="#fff" /><path d="M5 3l4 4H7l1 3H6L5 8z" fill="#fff" stroke="#14161c" strokeWidth=".6" /></>}
            />
            <DockItem
              label="Model Browser"
              height={77}
              gap={0}
              art={<><path d="M.5.5h5v6h-5z" fill="#fff" stroke="#2c3a78" /><path d="M.5 1h5" stroke="#2c3a78" strokeWidth="1.500" /><path d="M4.500 3.500h5v6h-5z" fill="#cdd3f2" stroke="#3c46a0" /><path d="M6 6h2M6 8h2" stroke="#3c46a0" strokeWidth=".8" /></>}
            />
          </Dock>

          <SideColumn>
            <Panel>
              <PanelHeader>
                <PanelTitle>Properties of Retrieve customer file</PanelTitle>
                <button aria-label="Pin properties"><Pin /></button>
                <button aria-label="Close properties"><Cross /></button>
              </PanelHeader>
              <PanelBody>
                <PageTabs>
                  <PageTab $active>Properties</PageTab>
                  <PageTab>Profiles</PageTab>
                </PageTabs>
                <TreeBox>
                  <TreeHead>
                    <span>Property</span>
                    <span>Value</span>
                  </TreeHead>
                  <TreeRows>
                    {treeRows.map((r) => (
                      <TreeRow key={r.name}>
                        <TreeName>
                          {r.guides.map((g, i) => (
                            <Guide key={i} $kind={g}>
                              {r.toggle && i === r.guides.length - 1 && (
                                <Toggle aria-label={`Toggle ${r.name}`}>
                                  <svg width="4" height="4" viewBox="0 0 4 4" stroke="#3b5c9e" strokeWidth=".8">
                                    <path d={r.toggle === '+' ? 'M0 2h4M2 0v4' : 'M0 2h4'} />
                                  </svg>
                                </Toggle>
                              )}
                            </Guide>
                          ))}
                          <TreeText $selected={r.selected}>{r.name}</TreeText>
                        </TreeName>
                        <TreeValue $selected={r.selected} $muted={r.muted}>{r.value}</TreeValue>
                      </TreeRow>
                    ))}
                  </TreeRows>
                </TreeBox>
                <ButtonBar>
                  <DisabledButton disabled><u>D</u>efault</DisabledButton>
                  <DisabledButton disabled><u>R</u>emove</DisabledButton>
                </ButtonBar>
              </PanelBody>
            </Panel>

            <Panel $grow>
              <PanelHeader>
                <PanelTitle>Worksets</PanelTitle>
                <button aria-label="Pin worksets"><Pin /></button>
                <button aria-label="Close worksets"><Cross /></button>
              </PanelHeader>
              <PanelBody $flush>
                <GridArea>
                  <PathTable>
                    <thead>
                      <tr><th scope="col">Path type</th><th scope="col">Duration</th></tr>
                    </thead>
                    <tbody>
                      <tr><td>Maximum critical path</td><td>17.41 hours</td></tr>
                      <tr><td>Weighted critical path</td><td>1.22 hours</td></tr>
                    </tbody>
                  </PathTable>
                </GridArea>
                <SheetTabs>
                  {['M1 1v5M6 0v7L2 3.500z', 'M5 0v7L1.500 3.500z', 'M2 0v7l3.500-3.500z', 'M1 0v7l4-3.500zM6 1v5'].map((d) => (
                    <SheetNav key={d} aria-label="Scroll tabs">
                      <svg width="7" height="7" viewBox="-1 -1 9 9" fill="#111" stroke="#111" strokeWidth=".8"><path d={d} /></svg>
                    </SheetNav>
                  ))}
                  <SheetTab>al Path</SheetTab>
                  <svg width="5" height="12" viewBox="0 0 5 12"><path d="M0 0l5 12H0z" fill="#fff" /><path d="M0 0l5 12" stroke="#222" /></svg>
                  <SheetTab>Alternative Paths</SheetTab>
                  <SheetTab $active>Critical Path</SheetTab>
                </SheetTabs>
              </PanelBody>
            </Panel>
          </SideColumn>

          <Editor>
            <EditorTabs>
              <EditorTab>
                <svg width="10" height="10" viewBox="0 0 10 10">
                  <circle cx="2.500" cy="2.500" r="1.700" fill="#7d2f33" />
                  <path d="M5.500 1h3v3h-3z" fill="#e9e3a0" stroke="#666" strokeWidth=".6" />
                  <path d="M.5 5.500h4v4h-4z" fill="#9bb4dd" stroke="#4c5f88" strokeWidth=".7" />
                  <circle cx="7.500" cy="7.700" r="1.500" fill="#8fae58" stroke="#4b5a2c" strokeWidth=".6" />
                </svg>
                <EditorTabLabel>Credit Card Acceptance BPMN...</EditorTabLabel>
                <button aria-label="Close model"><Cross size={5} /></button>
              </EditorTab>
              <MenuArrow aria-label="Open views">
                <svg width="5" height="3" viewBox="0 0 5 3"><path d="M0 0h5L2.500 3z" fill="#2b4a78" /></svg>
              </MenuArrow>
            </EditorTabs>
            <CanvasFrame>
              <Canvas>
                <Connectors />
                {tasks.map((t) => (
                  <React.Fragment key={t.text}>
                    <Task $x={t.x} $y={t.y}>{t.text}</Task>
                    <Note $tone="time" $x={t.x + 3} $y={t.y + 42}>{t.time}</Note>
                  </React.Fragment>
                ))}
                <Shapes />
                {captions.map(([x, y, text]) => (
                  <Caption key={text} $x={x} $y={y}>{text}</Caption>
                ))}
                {notes.map(([x, y, text]) => (
                  <Note key={`${x}-${y}`} $x={x} $y={y}>{text}</Note>
                ))}
                <Note $tone="plain" $x={862} $y={326}>Comple</Note>
                <PlayButton aria-label="Run simulation">
                  <svg width="11" height="12" viewBox="0 0 11 12"><path d="M1 1l10 5-10 5z" fill="#6f97c6" /></svg>
                </PlayButton>
              </Canvas>
              <VScroll>
                <ScrollArrow aria-label="Scroll up">
                  <svg width="6" height="4" viewBox="0 0 6 4" fill="none" stroke="#444"><path d="M1 3.500L3 1.500l2 2" strokeWidth="1.200" /></svg>
                </ScrollArrow>
                <VThumb />
                <ScrollArrow aria-label="Scroll down">
                  <svg width="6" height="4" viewBox="0 0 6 4" fill="none" stroke="#444"><path d="M1 .5l2 2 2-2" strokeWidth="1.200" /></svg>
                </ScrollArrow>
              </VScroll>
              <HScroll>
                <ScrollArrow aria-label="Scroll left">
                  <svg width="4" height="6" viewBox="0 0 4 6" fill="none" stroke="#444"><path d="M3 1L1 3l2 2" strokeWidth="1.200" /></svg>
                </ScrollArrow>
                <HThumb />
                <ScrollArrow aria-label="Scroll right">
                  <svg width="4" height="6" viewBox="0 0 4 6" fill="none" stroke="#444"><path d="M1 1l2 2-2 2" strokeWidth="1.200" /></svg>
                </ScrollArrow>
              </HScroll>
            </CanvasFrame>
          </Editor>
        </Body>

        <StatusBar>
          <StatusText>x:7.4 y:7.0 w:2.8 h:1.6</StatusText>
          <StatusText>Task Retrieve customer file</StatusText>
          <StatusText>Working Copy 'E2E Digital Transformation Demo'</StatusText>
          <Presence>ML</Presence>
          <StatusButton aria-label="Fit page">
            <svg width="10" height="9" viewBox="0 0 10 9"><path d="M.5.5h8v7h-8z" fill="#f7f7f0" stroke="#9fb0a8" strokeWidth=".8" /><path d="M9 1v7.500H1" fill="none" stroke="#5fb0a0" strokeWidth=".8" /></svg>
          </StatusButton>
          <StatusButton aria-label="Fit selection">
            <svg width="10" height="9" viewBox="0 0 10 9"><path d="M.5.5h8v7h-8z" fill="#eef1ee" stroke="#9fb0a8" strokeWidth=".8" /><path d="M1.500 2.500h3v2M5 4l2-2v4z" fill="#555" stroke="#444" strokeWidth=".8" /></svg>
          </StatusButton>
          <ActualSize>1:1</ActualSize>
          <Percent>100%</Percent>
          <button aria-label="Zoom out">
            <svg width="10" height="10" viewBox="0 0 10 10"><circle cx="5" cy="5" r="4.300" fill="#e9eff6" stroke="#5f7190" strokeWidth=".8" /><path d="M2.500 5h5" stroke="#3b4a63" strokeWidth="1.200" /></svg>
          </button>
          <ZoomSlider type="range" min="0" max="100" defaultValue="50" aria-label="Zoom" />
          <button aria-label="Zoom in">
            <svg width="10" height="10" viewBox="0 0 10 10"><circle cx="5" cy="5" r="4.300" fill="#e9eff6" stroke="#5f7190" strokeWidth=".8" /><path d="M2.500 5h5M5 2.500v5" stroke="#3b4a63" strokeWidth="1.200" /></svg>
          </button>
          <StatusButton aria-label="Overview">
            <svg width="9" height="9" viewBox="0 0 9 9"><path d="M.5.5h7v7h-7z" fill="#eef1ee" stroke="#9fb0a8" strokeWidth=".8" /><path d="M2 2.500h2M4 5h3v2H4z" fill="#555" stroke="#444" strokeWidth=".8" /></svg>
          </StatusButton>
          <Grip width="9" height="9" viewBox="0 0 9 9" fill="#8397b5"><path d="M7 1h1v1H7zM7 4h1v1H7zM4 4h1v1H4zM7 7h1v1H7zM4 7h1v1H4zM1 7h1v1H1z" /></Grip>
        </StatusBar>
      </Window>
    </Page>
  );
}
